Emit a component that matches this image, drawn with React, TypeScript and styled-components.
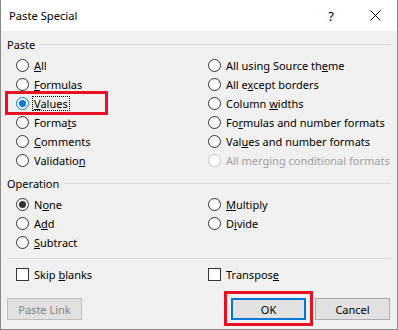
import styled, { createGlobalStyle } from 'styled-components';

const GlobalStyle = createGlobalStyle`
  html, body {
    margin: 0;
    padding: 0;
    background: #f0f0f0;
  }
  body {
    font-family: "Noto Sans", "Open Sans", Arial, sans-serif;
    font-size: 11px;
    color: #000;
  }
`;

const Window = styled.div`
  position: relative;
  width: 398px;
  height: 330px;
  box-sizing: border-box;
  border: 1px solid #8a8a8a;
  border-top: none;
  background: #f0f0f0;
  display: flex;
  flex-direction: column;
`;

const TitleBar = styled.div`
  height: 31px;
  background: #fff;
  display: flex;
  align-items: center;
  padding-left: 8px;
`;

const Title = styled.div`
  flex: 1;
  font-size: 11.2px;
`;

const TitleButton = styled.div`
  width: 44px;
  height: 31px;
  display: flex;
  align-items: center;
  justify-content: center;
  font-size: 13px;
`;

const Body = styled.div`
  padding: 0 6px;
  display: flex;
  flex-direction: column;
`;

const GroupHeader = styled.div`
  height: 18px;
  margin-top: 4px;
  display: flex;
  align-items: center;
  gap: 5px;
  &::after {
    content: '';
    flex: 1;
    height: 1px;
    background: #dcdcdc;
  }
`;

const OptionGrid = styled.div<{ $top?: number }>`
  display: grid;
  grid-template-columns: 192px 1fr;
  grid-auto-rows: 19px;
  margin-top: ${({ $top }) => $top ?? 3}px;
  padding-left: 9px;
`;

const Option = styled.label<{ $disabled?: boolean }>`
  position: relative;
  display: flex;
  align-items: center;
  gap: 4px;
  white-space: nowrap;
  color: ${({ $disabled }) => ($disabled ? '#a0a0a0' : '#000')};
`;

const Radio = styled.span<{ $checked?: 'focus' | 'plain'; $disabled?: boolean }>`
  width: 13px;
  height: 13px;
  box-sizing: border-box;
  border-radius: 50%;
  border: 1px solid
    ${({ $checked, $disabled }) =>
      $disabled ? '#c4c4c4' : $checked === 'focus' ? '#0078d7' : '#333'};
  background: #fff;
  display: flex;
  align-items: center;
  justify-content: center;
  flex-shrink: 0;
  &::after {
    content: '';
    display: ${({ $checked }) => ($checked ? 'block' : 'none')};
    width: 7px;
    height: 7px;
    border-radius: 50%;
    background: ${({ $checked }) => ($checked === 'focus' ? '#0078d7' : '#333')};
  }
`;

const Checkbox = styled.span`
  width: 13px;
  height: 13px;
  box-sizing: border-box;
  border: 1px solid #333;
  background: #fff;
  flex-shrink: 0;
`;

const Text = styled.span<{ $focused?: boolean }>`
  padding: 0 1px;
  margin-left: -1px;
  border: 1px dotted ${({ $focused }) => ($focused ? '#000' : 'transparent')};
  line-height: 13px;
`;

const Highlight = styled.div<{ $w: number; $h: number; $l: number; $t: number }>`
  position: absolute;
  left: ${({ $l }) => $l}px;
  top: ${({ $t }) => $t}px;
  width: ${({ $w }) => $w}px;
  height: ${({ $h }) => $h}px;
  box-sizing: border-box;
  border: 3px solid #e81123;
  pointer-events: none;
`;

const Separator = styled.div`
  height: 1px;
  background: #dcdcdc;
  margin-top: 6px;
`;

const Footer = styled.div`
  display: flex;
  align-items: center;
  margin-top: 14px;
`;

const Button = styled.button<{ $primary?: boolean }>`
  position: relative;
  width: 75px;
  height: 22px;
  box-sizing: border-box;
  font-family: inherit;
  font-size: 11px;
  background: #e1e1e1;
  color: ${({ disabled }) => (disabled ? '#838383' : '#000')};
  border: ${({ $primary, disabled }) =>
    $primary ? '2px solid #0078d7' : disabled ? '1px solid #bfbfbf' : '1px solid #adadad'};
  padding: 0;
`;

const ButtonGroup = styled.div`
  margin-left: auto;
  display: flex;
  gap: 9px;
  margin-right: 1px;
`;

type Opt = { label: string; key: number; checked?: 'focus' | 'plain'; disabled?: boolean; focused?: boolean };

const Underlined = ({ label, idx }: { label: string; idx: number }) =>
  idx < 0 ? (
    <>{label}</>
  ) : (
    <>
      {label.slice(0, idx)}
      <u>{label[idx]}</u>
      {label.slice(idx + 1)}
    </>
  );

const pasteOpts: Opt[] = [
  { label: 'All', key: 0 },
  { label: 'All using Source theme', key: 19 },
  { label: 'Formulas', key: 0 },
  { label: 'All except borders', key: 5 },
  { label: 'Values', key: 0, checked: 'focus', focused: true },
  { label: 'Column widths', key: 7 },
  { label: 'Formats', key: 5 },
  { label: 'Formulas and number formats', key: 2 },
  { label: 'Comments', key: 0 },
  { label: 'Values and number formats', key: 3 },
  { label: 'Validation', key: 9 },
  { label: 'All merging conditional formats', key: -1, disabled: true },
];

const opOpts: (Opt | null)[] = [
  { label: 'None', key: 1, checked: 'plain' },
  { label: 'Multiply', key: 0 },
  { label: 'Add', key: 1 },
  { label: 'Divide', key: 1 },
  { label: 'Subtract', key: 0 },
  null,
];

const RadioOption = ({ o }: { o: Opt }) => (
  <Option $disabled={o.disabled}>
    <Radio $checked={o.checked} $disabled={o.disabled} />
    <Text $focused={o.focused}>
      <Underlined label={o.label} idx={o.key} />
    </Text>
    {o.focused && <Highlight $l={-11} $t={-3} $w={103} $h={24} />}
  </Option>
);

const CloseIcon = () => (
  <svg width="11" height="11" viewBox="0 0 11 11">
    <path d="M0.5 0.5 L10.5 10.5 M10.5 0.5 L0.5 10.5" stroke="#000" strokeWidth="1" />
  </svg>
);

export default function App() {
  return (
    <>
      <GlobalStyle />
      <Window>
        <TitleBar>
          <Title>Paste Special</Title>
          <TitleButton>?</TitleButton>
          <TitleButton>
            <CloseIcon />
          </TitleButton>
        </TitleBar>
        <Body>
          <GroupHeader>Paste</GroupHeader>
          <OptionGrid>
            {pasteOpts.map((o) => (
              <RadioOption key={o.label} o={o} />
            ))}
          </OptionGrid>
          <GroupHeader>Operation</GroupHeader>
          <OptionGrid>
            {opOpts.map((o, i) => (o ? <RadioOption key={o.label} o={o} /> : <span key={i} />))}
          </OptionGrid>
          <Separator />
          <OptionGrid $top={6}>
            <Option>
              <Checkbox />
              <Text>
                <Underlined label="Skip blanks" idx={5} />
              </Text>
            </Option>
            <Option>
              <Checkbox />
              <Text>
                <Underlined label="Transpose" idx={8} />
              </Text>
            </Option>
          </OptionGrid>
          <Footer>
            <Button disabled>Paste Link</Button>
            <ButtonGroup>
              <Button $primary>
                OK
                <Highlight $l={-9} $t={-9} $w={89} $h={35} />
              </Button>
              <Button>Cancel</Button>
            </ButtonGroup>
          </Footer>
        </Body>
      </Window>
    </>
  );
}
